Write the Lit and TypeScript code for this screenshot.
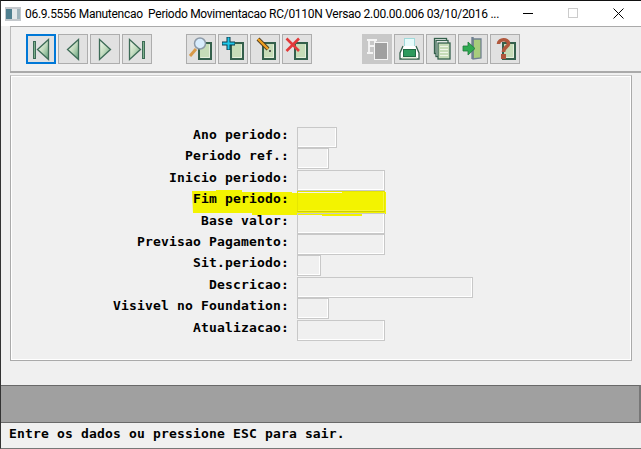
import { LitElement, html, css, svg } from "lit";
import { customElement } from "lit/decorators.js";

const doc = svg`<rect x="13" y="9" width="12" height="16" fill="#c6dcb8" stroke="#34604c" stroke-width="2"/><path d="M14.500 23.500H23.500V10.500" fill="none" stroke="#e4efdc"/>`;
const tri = (pts: string) => svg`<polygon points=${pts} fill="url(#g)" stroke="#3d6b57" stroke-width="1.3"/>`;

const icons = [
  svg`<rect x="7" y="7" width="3" height="18" fill="#3d6b57"/><rect x="8" y="8" width="1" height="16" fill="#7fb08c"/>${tri("22.500,5.500 22.500,25.500 11.500,15.500")}`,
  tri("20.500,5.500 20.500,25.500 9.500,15.500"),
  tri("9.500,5.500 9.500,25.500 20.500,15.500"),
  svg`${tri("7.500,5.500 7.500,25.500 18.500,15.500")}<rect x="20" y="7" width="3" height="18" fill="#3d6b57"/><rect x="21" y="8" width="1" height="16" fill="#7fb08c"/>`,
  svg`${doc}<line x1="4" y1="22" x2="10" y2="15" stroke="#d89a4a" stroke-width="3"/><circle cx="14" cy="9.500" r="5.500" fill="#d8ecfc" stroke="#8d9aa8" stroke-width="1.500"/>`,
  svg`${doc}<path d="M10.500 3V16M4 9.500H17" stroke="#0d3c4c" stroke-width="4"/><path d="M10.500 3.500V15.500M4.500 9.500H16.500" stroke="#1ec8ea" stroke-width="2"/>`,
  svg`${doc}<line x1="8" y1="5" x2="18" y2="15" stroke="#4a3a20" stroke-width="4"/><line x1="8" y1="5" x2="18" y2="15" stroke="#f0a020" stroke-width="2.400"/><circle cx="20" cy="17" r="1" fill="#333"/>`,
  svg`${doc}<path d="M4.500 4.500L17 17M17 4.500L4.500 17" stroke="#e23a3a" stroke-width="2.600"/>`,
  svg`<rect x="12.500" y="8.500" width="13" height="17" fill="#a0a0a0" stroke="#f4f4f4"/><path d="M5 6H15M7 6V19M5 19H11M7 12H12M13 6V9" stroke="#f4f4f4" stroke-width="1.800" fill="none"/>`,
  svg`<rect x="10.500" y="4.500" width="10" height="11" fill="#e8fbfb" stroke="#9fdada"/><path d="M9 12L6 19V25H25V19L22 12" fill="#fff" stroke="#34604c" stroke-width="1.300"/><rect x="9.500" y="15.500" width="12" height="7" fill="#2d9a5c" stroke="#1f6a44"/><path d="M8 24H23" stroke="#c9ddbb"/>`,
  svg`<rect x="8.500" y="4.500" width="12" height="15" fill="#fff" stroke="#34604c" stroke-width="1.300"/><rect x="10" y="6.500" width="12" height="16" fill="#fff" stroke="#34604c" stroke-width="1.300"/><rect x="12" y="9" width="12" height="16" fill="#c6dcb8" stroke="#34604c" stroke-width="1.300"/><path d="M14 12.500H22M14 15.500H22M14 18.500H22M14 21.500H22" stroke="#eef5e8"/>`,
  svg`<path d="M15 5H23V24L15 25Z" fill="#a8cc7c" stroke="#708090" stroke-width="1.300"/><path d="M14.500 3V25" stroke="#708090" stroke-width="2.400"/><path d="M5 12H10V8L17 14.500L10 21V17H5Z" fill="#2eaa50" stroke="#1f7a3a" stroke-width=".8"/>`,
  svg`${doc}<path d="M8.500 10C8.500 4.500 18.500 4.500 18.500 9.500C18.500 13 13.500 13 13.500 18" fill="none" stroke="#b0583c" stroke-width="3.600"/><rect x="11" y="20" width="5" height="5" fill="#b0583c"/>`,
];

const groups = [[0, 1, 2, 3], [4, 5, 6, 7], [8, 9, 10, 11, 12]];

const rows: [string, number][] = [
  ["Ano periodo:", 40],
  ["Periodo ref.:", 32],
  ["Inicio periodo:", 88],
  ["Fim periodo:", 88],
  ["Base valor:", 88],
  ["Previsao Pagamento:", 88],
  ["Sit.periodo:", 24],
  ["Descricao:", 176],
  ["Visivel no Foundation:", 32],
  ["Atualizacao:", 88],
];

@customElement("app-root")
export class AppRoot extends LitElement {
  static styles = css`
    :host { display: block; width: 641px; height: 449px; overflow: hidden; background: #f0f0f0; }
    .window { box-sizing: border-box; height: 449px; display: flex; flex-direction: column; background: #f0f0f0;
      border-top: 1px solid #111; border-left: 1px solid #333; border-bottom: 1px solid #777; position: relative; }
    .title { height: 25px; background: #fff; display: flex; align-items: center; flex: none; }
    .appicon { margin: 0 4px 0 4px; flex: none; display: block; }
    .title-text { flex: 1; font: 12px Roboto, "Open Sans", sans-serif; letter-spacing: -0.28px; white-space: pre; color: #000; padding-top: 1px; }
    .winbtns { display: flex; flex: none; }
    .winbtn { width: 45px; height: 25px; display: flex; align-items: center; justify-content: center; }
    .toolbar { flex: none; height: 44px; margin-left: 9px; border-top: 1px solid #aaa; border-bottom: 2px solid #aaa; box-shadow: inset 1px 0 0 #bbb; display: flex; align-items: center; padding-left: 16px; }
    .group { display: flex; gap: 2px; }
    .group.g2 { margin-left: 34px; }
    .group.g3 { margin-left: 50px; }
    .btn { box-sizing: border-box; width: 30px; height: 30px; background: #e1e1e1; border: 1px solid #adadad; display: block; }
    .btn.focus { border: 2px solid #0078d7; }
    .btn.off { background: #c8c8c8; border-color: #c8c8c8; }
    .btn svg { display: block; margin: -1px; }
    .btn.focus svg { margin: -2px; }
    .panel { flex: none; box-sizing: border-box; height: 286px; margin: 2px 9px 0 9px; border: 1px solid #aaa; outline: 1px solid #fff; outline-offset: -2px; border-top-color: #ccc; position: relative; padding: 51px 0 0 0; }
    .form { position: relative; z-index: 1; display: grid; grid-template-columns: 278px 1fr; grid-auto-rows: 21.4px; column-gap: 8px; font: bold 13px "DejaVu Sans Mono", "Liberation Mono", monospace; letter-spacing: 0.17px; color: #000; }
    .label { text-align: right; white-space: pre; line-height: 16px; }
    .field { box-sizing: border-box; height: 21px; border: 1px solid #c8c8c8; box-shadow: inset -1px -1px 0 #fff; }
    .field.marked { border-color: #e6e600 #e6e600 #cfcf00 #e6e600; box-shadow: inset -1px -1px 0 #f7f73c; }
    .mark { position: absolute; left: 181px; top: 114px; display: block; }
    .spacer { flex: 1; }
    .status { flex: none; height: 36px; background: #a0a0a0; border-top: 1px solid #696969; border-bottom: 1px solid #696969; border-right: 2px solid #777; }
    .msg { flex: none; height: 25px; box-sizing: border-box; padding: 2px 0 0 8px; font: bold 13px "DejaVu Sans Mono", "Liberation Mono", monospace; letter-spacing: 0.17px; line-height: 18px; color: #000; white-space: pre; }
  `;

  render() {
    return html`<div class="window">
      <svg width="0" height="0" style="position:absolute"><defs><linearGradient id="g" x1="0" y1="0" x2="1" y2="1"><stop offset="0" stop-color="#f4f9f0"/><stop offset=".5" stop-color="#c4dcc0"/><stop offset="1" stop-color="#5f9f78"/></linearGradient></defs></svg>
      <div class="title">
        <svg class="appicon" width="16" height="16" viewBox="0 0 16 16"><rect width="16" height="14" y="1" fill="#c4c8cc"/><rect x="1" y="3" width="6" height="10" fill="#4f7f8f"/><rect x="7" y="3" width="5" height="10" fill="#e4e8ea"/><rect x="12" y="3" width="3" height="10" fill="#9fb4bc"/></svg>
        <div class="title-text">06.9.5556 Manutencao  Periodo Movimentacao RC/0110N Versao 2.00.00.006 03/10/2016 ...</div>
        <div class="winbtns">
          <div class="winbtn"><svg width="11" height="11"><path d="M0 5.500H10" stroke="#000"/></svg></div>
          <div class="winbtn"><svg width="11" height="11"><rect x=".5" y=".5" width="9" height="9" fill="none" stroke="#ccc"/></svg></div>
          <div class="winbtn"><svg width="11" height="11"><path d="M.5 .5L10.500 10.500M10.500 .5L.5 10.500" stroke="#000"/></svg></div>
        </div>
      </div>
      <div class="toolbar">
        ${groups.map((g, gi) => html`<div class="group g${gi + 1}">
          ${g.map((i) => html`<div class="btn ${i === 0 ? "focus" : ""} ${i === 8 ? "off" : ""}"><svg width="30" height="30" viewBox="0 0 30 30">${icons[i]}</svg></div>`)}
        </div>`)}
      </div>
      <div class="panel">
        <div class="form">
          ${rows.map(([l, w], i) => html`<div class="label">${l}</div><div><div class="field ${i === 3 ? "marked" : ""}" style="width:${w}px"></div></div>`)}
        </div>
        <svg class="mark" width="196" height="26" viewBox="0 0 196 26"><path d="M0 1H24V0H50V2H100V3H150V2H194V24H170V26H130V25H60V23H1Z" fill="#f3f300"/></svg>
      </div>
      <div class="spacer"></div>
      <div class="status"></div>
      <div class="msg">Entre os dados ou pressione ESC para sair.</div>
    </div>`;
  }
}
